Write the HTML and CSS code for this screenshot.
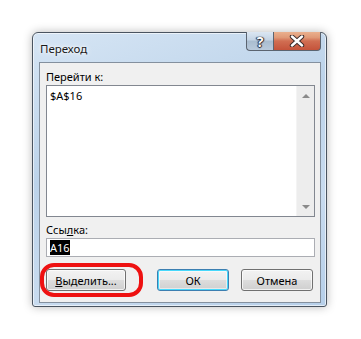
FILE: index.html
```html
<!DOCTYPE html>
<html lang="ru">
<head>
    <meta charset="UTF-8">
    <title>Переход</title>
    <link rel="stylesheet" href="styles.css">
</head>
<body>
    <div class="dialog">
        <div class="titlebar">
            <span class="title">Переход</span>
            <div class="caption">
                <span class="cap-btn help">?</span>
                <span class="cap-btn close">
                    <svg width="16" height="12" viewBox="0 0 16 12">
                        <path d="M3 1.5 L13 10.5 M13 1.5 L3 10.5" stroke="#3a2a2a" stroke-width="4.4" stroke-linecap="round"/>
                        <path d="M3 1.5 L13 10.5 M13 1.5 L3 10.5" stroke="#fff" stroke-width="2.4" stroke-linecap="round"/>
                    </svg>
                </span>
            </div>
        </div>
        <div class="client">
            <div class="lbl">Перейти к:</div>
            <div class="listbox">
                <div class="items">$A$16</div>
                <div class="scroll">
                    <span class="arr up"></span>
                    <span class="arr down"></span>
                </div>
            </div>
            <div class="lbl lbl2">Ссы<u>л</u>ка:</div>
            <div class="field"><span class="sel">A16</span></div>
            <div class="buttons">
                <button class="btn wide"><u>В</u>ыделить...</button>
                <button class="btn default">ОК</button>
                <button class="btn">Отмена</button>
            </div>
            <div class="mark"></div>
        </div>
    </div>
</body>
</html>
```

FILE: styles.css
```css
body { margin: 0; padding: 32px; background: #fff; font-family: "Noto Sans", "Open Sans", sans-serif; font-size: 11px; color: #000; }
.dialog { width: 295px; box-sizing: border-box; border: 1px solid #4a5460; border-radius: 6px 6px 3px 3px; background: linear-gradient(160deg, #d6e5f4 0%, #bcd3ea 40%, #c8dbef 70%, #b6cfe9 100%); box-shadow: 0 0 10px rgba(0,0,0,0.28), inset 0 0 0 1px rgba(255,255,255,0.6); padding: 0 5px 3px 6px; }
.titlebar { display: flex; justify-content: space-between; align-items: flex-start; height: 29px; }
.title { padding: 8px 0 0 1px; font-size: 11.5px; color: #1a1a1a; text-shadow: 0 0 6px #fff, 0 0 3px #fff; }
.caption { display: flex; margin-top: -1px; }
.cap-btn { height: 18px; display: flex; align-items: center; justify-content: center; border: 1px solid #5b6470; border-top: none; }
.help { width: 26px; border-radius: 0 0 0 4px; border-right: none; background: linear-gradient(#dbe6f2 0%, #c3d3e4 45%, #a9bccf 50%, #b9cadc 100%); font-weight: bold; font-size: 14px; color: #fff; text-shadow: 0 0 1px #223, 1px 0 1px #223, -1px 0 1px #223, 0 1px 1px #223; }
.close { width: 46px; border-radius: 0 0 4px 0; background: linear-gradient(#eab08e 0%, #e09a78 30%, #d16e52 50%, #c4533b 100%); }
.client { position: relative; background: #f0f0f0; border: 1px solid #84909e; padding: 6px 5px 11px 6px; }
.lbl { height: 16px; line-height: 16px; }
.lbl2 { margin-top: 5px; }
.listbox { display: flex; height: 132px; box-sizing: border-box; border: 1px solid #828790; background: #fff; }
.items { flex: 1; padding: 1px 0 0 3px; line-height: 17px; }
.scroll { width: 17px; background: #ededed; border-left: 1px solid #f4f4f4; display: flex; flex-direction: column; justify-content: space-between; align-items: center; padding: 8px 0 7px; }
.arr { width: 0; height: 0; border-left: 4px solid transparent; border-right: 4px solid transparent; }
.up { border-bottom: 4px solid #8a8a8a; }
.down { border-top: 4px solid #8a8a8a; }
.field { height: 19px; box-sizing: border-box; border: 1px solid #abadb3; background: #fff; padding: 1px 0 0 3px; line-height: 15px; }
.sel { background: #000; color: #fff; }
.buttons { display: flex; gap: 12px; margin-top: 12px; padding-right: 2px; }
.btn { height: 22px; width: 72px; padding: 0; font-family: inherit; font-size: 11px; color: #000; border: 1px solid #707070; border-radius: 3px; background: linear-gradient(#f2f2f2 0%, #ebebeb 50%, #dddddd 51%, #cfcfcf 100%); box-shadow: inset 0 0 0 1px rgba(255,255,255,0.7); }
.wide { width: 80px; margin-right: 19px; }
.default { border-color: #3c7fb1; box-shadow: inset 0 0 0 1px #48d8fb, inset 0 0 0 2px rgba(255,255,255,0.5); }
.mark { position: absolute; left: 0; top: 200px; width: 103px; height: 34px; box-sizing: border-box; border: 4px solid #ee1111; border-radius: 14px; }
```
